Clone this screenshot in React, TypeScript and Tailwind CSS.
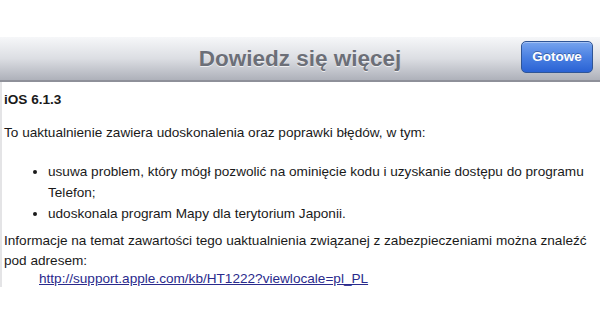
import React from 'react';

export default function App() {
  const font = { fontFamily: '"Liberation Sans", Arial, Helvetica, sans-serif' };

  return (
    <div className="w-[600px] h-[325px] bg-white overflow-hidden" style={font}>
      <div className="h-[37px]" />

      {/* header bar */}
      <div className="relative h-[45px] flex items-center justify-center bg-gradient-to-b from-[#f6f7f9] via-[#dcdee3] to-[#aeb1ba] border-b-2 border-[#8e9099]">
        <h1 className="text-[22.5px] font-bold text-[#6c6f78] [text-shadow:0_1px_0_rgba(255,255,255,0.7)]">
          Dowiedz się więcej
        </h1>
        <button className="absolute right-[7px] top-[4px] w-[72px] h-[32px] rounded-[5px] border border-[#2f5596] bg-gradient-to-b from-[#77a4ee] via-[#4a80e2] to-[#2a62d4] text-white text-[13.5px] font-bold shadow-[inset_0_1px_0_rgba(255,255,255,0.35)] [text-shadow:0_-1px_0_rgba(0,0,0,0.3)]">
          Gotowe
        </button>
      </div>

      {/* content */}
      <div className="border-l-2 border-[#e4e4e6] h-[205px] pl-[2px] pt-[8px] text-[13.6px] leading-[19px] text-[#1a1a1a]">
        <p className="font-bold">iOS 6.1.3</p>
        <p className="mt-[14px]">To uaktualnienie zawiera udoskonalenia oraz poprawki błędów, w tym:</p>
        <ul className="mt-[19px] pl-[44px] list-disc leading-[21px]">
          <li>usuwa problem, który mógł pozwolić na ominięcie kodu i uzyskanie dostępu do programu Telefon;</li>
          <li>udoskonala program Mapy dla terytorium Japonii.</li>
        </ul>
        <p className="mt-[7px] leading-[20px]">
          Informacje na temat zawartości tego uaktualnienia związanej z zabezpieczeniami można znaleźć
          <br />
          pod adresem:
        </p>
        <a href="#" className="block pl-[35px] leading-[16px] text-[#2a2a8c] underline">
          http://support.apple.com/kb/HT1222?viewlocale=pl_PL
        </a>
      </div>
    </div>
  );
}
